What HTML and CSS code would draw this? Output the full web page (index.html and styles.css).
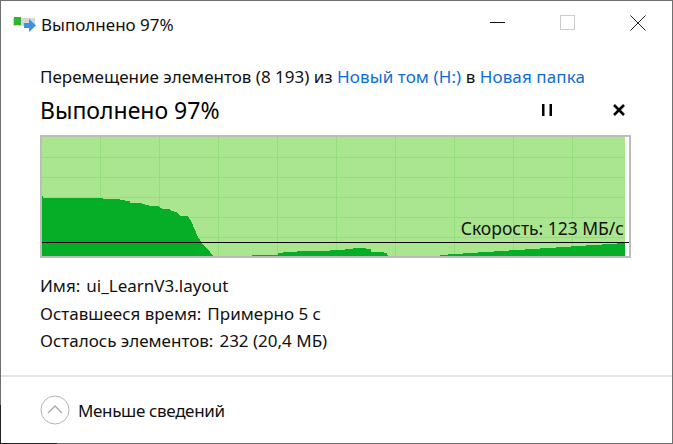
FILE: index.html
```html
<!DOCTYPE html>
<html lang="ru">
<head>
  <meta charset="UTF-8" />
  <title>Выполнено 97%</title>
  <link rel="stylesheet" href="styles.css">
</head>
<body>
  <div class="window">
    <!-- Titelleiste -->
    <div class="titlebar">
      <svg class="app-icon" width="24" height="16" viewBox="0 0 24 16">
        <rect x="0" y="1" width="22" height="8" fill="#d6d6d6"/>
        <rect x="1" y="0" width="7" height="8" fill="#2fb52f"/>
        <path d="M11 6h5V2l7 6.500-7 6.500v-4h-5z" fill="#3b94e2"/>
      </svg>
      <span class="title">Выполнено 97%</span>
      <div class="win-buttons">
        <svg width="16" height="16" viewBox="0 0 16 16"><path d="M0 7.500h15" stroke="#111" fill="none"/></svg>
        <svg width="16" height="16" viewBox="0 0 16 16"><rect x="0.500" y="0.500" width="14" height="14" stroke="#ccc" fill="none"/></svg>
        <svg width="16" height="16" viewBox="0 0 16 16"><path d="M0.500 0.500l15 15M15.500 0.500l-15 15" stroke="#222" fill="none"/></svg>
      </div>
    </div>

    <div class="content">
      <div class="source">
        Перемещение элементов (8 193) из <a href="#">Новый том (H:)</a> в <a href="#">Новая папка</a>
      </div>
      <div class="status-row">
        <h1>Выполнено 97%</h1>
        <div class="actions">
          <svg width="12" height="12" viewBox="0 0 12 12"><path d="M1 0h2.500v12H1zM8.500 0H11v12H8.500z" fill="#000"/></svg>
          <svg width="12" height="12" viewBox="0 0 12 12"><path d="M1 1l10 10M11 1L1 11" stroke="#000" stroke-width="2.600" fill="none"/></svg>
        </div>
      </div>

      <!-- Diagramm -->
      <div class="chart">
        <svg class="chart-plot" width="587" height="119" viewBox="0 0 587 119" shape-rendering="crispEdges">
          <rect width="583" height="119" fill="#a9e68f"/>
          <path d="M58.500 0V119M117.500 0V119M176.500 0V119M235.500 0V119M294.500 0V119M353.500 0V119M412.500 0V119M471.500 0V119M530.500 0V119" stroke="#92e07c" fill="none"/>
          <path d="M0 20.500H583M0 40.500H583M0 60.500H583M0 80.500H583M0 100.500H583" stroke="#92e07c" fill="none"/>
          <path d="M0 119V59H1V61H61V62H78V63H83V64H88V66H98L109 69H116L121 72H128V73L136 76L138 79H146L150 86L156 100L161 108L168 115L171 119Z" fill="#05ae26"/>
          <path d="M210 119V118H236V116H241V115H255V114H288V113H303V112H311V111H324V112H329V115H342V116H345V118H346V119Z" fill="#05ae26"/>
          <path d="M398 119V118L583 106V119Z" fill="#05ae26"/>
        </svg>
        <div class="speed-line"></div>
        <div class="speed">Скорость: 123 МБ/с</div>
      </div>

      <div class="details">
        <div class="detail"><span>Имя:</span><span>ui_LearnV3.layout</span></div>
        <div class="detail"><span>Оставшееся время:</span><span>Примерно 5 с</span></div>
        <div class="detail"><span>Осталось элементов:</span><span>232 (20,4 МБ)</span></div>
      </div>
    </div>

    <div class="footer">
      <svg width="30" height="30" viewBox="0 0 30 30">
        <circle cx="15" cy="15" r="14" stroke="#b4b4b4" fill="#fff"/>
        <path d="M8 18l7-7 7 7" stroke="#a8a8a8" stroke-width="1.300" fill="none"/>
      </svg>
      <span>Меньше сведений</span>
    </div>
    <div class="corner"></div>
  </div>
</body>
</html>
```

FILE: styles.css
```css
html, body {
  margin: 0;
  height: 100%;
}
body {
  font-family: "Noto Sans", sans-serif;
  font-size: 17px;
  color: #111;
  background: #fff;
}
.window {
  position: relative;
  box-sizing: border-box;
  height: 444px;
  border: 1px solid #707070;
  display: flex;
  flex-direction: column;
}
.titlebar {
  height: 47px;
  display: flex;
  align-items: center;
  padding-left: 12px;
  flex-shrink: 0;
}
.app-icon {
  margin-right: 4px;
}
.title {
  flex: 1;
}
.win-buttons {
  display: flex;
  gap: 54px;
  padding-right: 26px;
  margin-bottom: 4px;
}
.content {
  flex: 1;
  padding: 19px 0 0 39px;
}
.source {
  line-height: 20px;
}
.source a {
  color: #0f6cd8;
  text-decoration: none;
  letter-spacing: 0.1px;
}
.status-row {
  display: flex;
  align-items: center;
  justify-content: space-between;
  height: 30px;
  margin-top: 8px;
  padding-right: 47px;
}
h1 {
  margin: 0;
  font-size: 23px;
  font-weight: 400;
  color: #000;
}
.actions {
  display: flex;
  gap: 60px;
}
.chart {
  position: relative;
  box-sizing: border-box;
  width: 591px;
  height: 123px;
  margin-top: 10px;
  border: 2px solid #bcbcbc;
  background: #fff;
}
.chart-plot {
  display: block;
}
.speed-line {
  position: absolute;
  left: 0;
  right: 0;
  top: 105px;
  height: 1px;
  background: #000;
}
.speed {
  position: absolute;
  right: 5px;
  top: 80px;
  font-size: 17.500px;
  line-height: 22px;
  white-space: nowrap;
}
.details {
  margin-top: 14px;
}
.detail {
  display: flex;
  gap: 6px;
  line-height: 27.500px;
}
.footer {
  height: 68px;
  flex-shrink: 0;
  box-sizing: border-box;
  border-top: 2px solid #e5e5e5;
  display: flex;
  align-items: center;
  gap: 8px;
  padding-left: 39px;
  letter-spacing: -0.350px;
}
.corner {
  position: absolute;
  left: -1px;
  bottom: -1px;
  width: 56px;
  height: 38px;
  border-left: 1px solid #222;
  border-bottom: 1px solid #222;
}
```
